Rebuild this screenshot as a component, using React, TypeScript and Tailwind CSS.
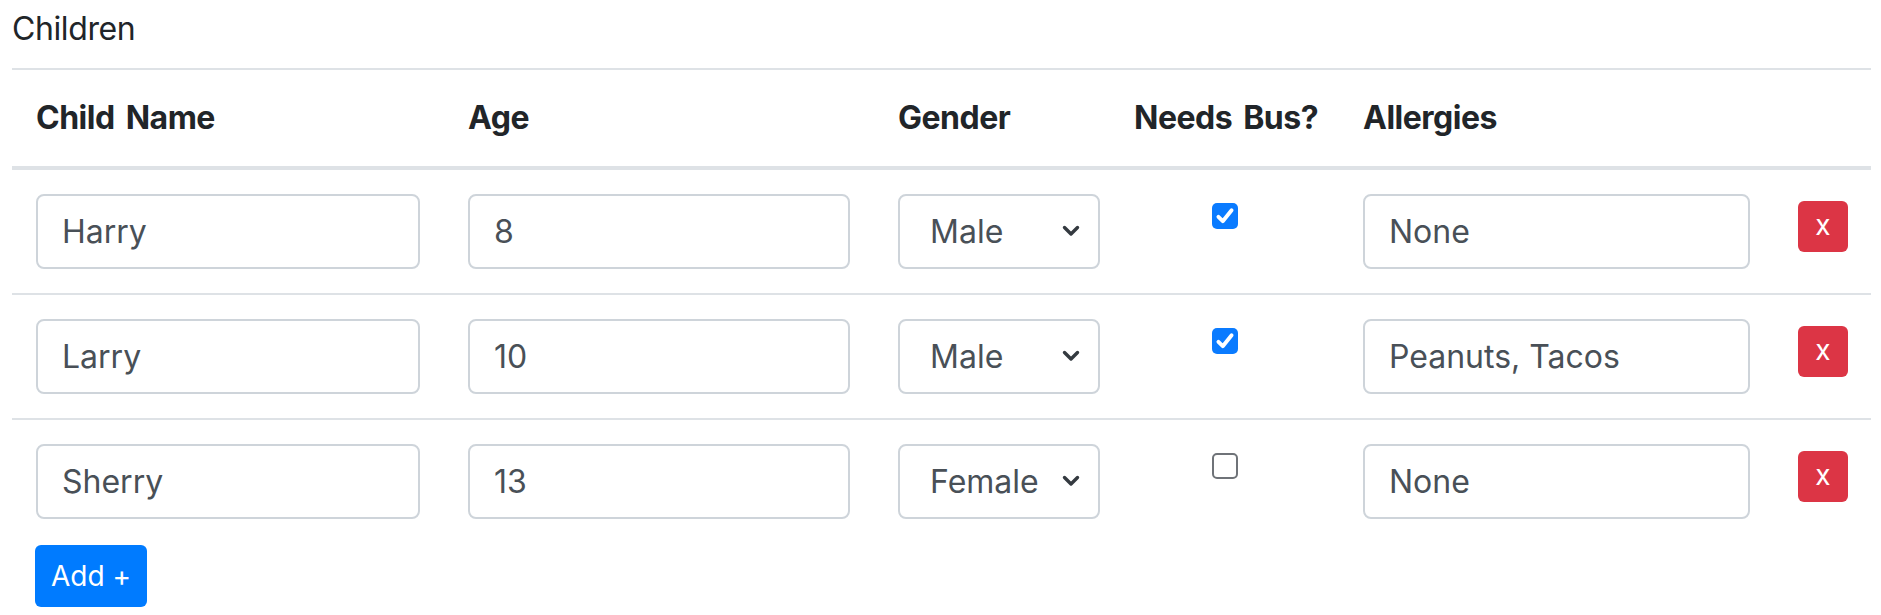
import React, { useState } from 'react';

interface Child {
  name: string;
  age: string;
  gender: string;
  bus: boolean;
  allergies: string;
}

const initial: Child[] = [
  { name: 'Harry', age: '8', gender: 'Male', bus: true, allergies: 'None' },
  { name: 'Larry', age: '10', gender: 'Male', bus: true, allergies: 'Peanuts, Tacos' },
  { name: 'Sherry', age: '13', gender: 'Female', bus: false, allergies: 'None' },
];

const inputCls =
  'block w-full h-[75px] px-[24px] rounded-[8px] border-2 border-[#ced4da] bg-white text-[32px] text-[#495057] outline-none';

const Checkbox: React.FC<{ checked: boolean; onChange: () => void }> = ({ checked, onChange }) => (
  <button
    type="button"
    onClick={onChange}
    className={`mx-auto mt-[9px] flex h-[26px] w-[26px] items-center justify-center rounded-[5px] ${
      checked ? 'bg-[#0a7bff]' : 'border-2 border-[#6f7378] bg-white'
    }`}
  >
    {checked && (
      <svg viewBox="0 0 16 16" className="h-[22px] w-[22px]">
        <path d="M3.2 8.6 L6.4 11.8 L12.8 3.8" fill="none" stroke="white" strokeWidth="2.8" strokeLinecap="round" strokeLinejoin="round" />
      </svg>
    )}
  </button>
);

const App: React.FC = () => {
  const [kids, setKids] = useState<Child[]>(initial);

  const update = (i: number, patch: Partial<Child>) =>
    setKids(kids.map((k, j) => (j === i ? { ...k, ...patch } : k)));

  return (
    <div className="min-h-screen bg-white pl-[12px] pr-[10px] pt-[5px] font-['Inter','Liberation_Sans',sans-serif] text-[#212529]">
      <label className="mb-[15px] block text-[32px] leading-[48px] tracking-[-0.4px]">Children</label>

      <table className="w-full table-fixed border-collapse">
        <colgroup>
          <col className="w-[432px]" />
          <col className="w-[430px]" />
          <col className="w-[236px]" />
          <col className="w-[229px]" />
          <col className="w-[435px]" />
          <col />
        </colgroup>
        <thead>
          <tr className="border-t-2 border-b-4 border-[#dee2e6] text-left">
            {['Child Name', 'Age', 'Gender', 'Needs Bus?', 'Allergies', ''].map((h, i) => (
              <th key={i} className="whitespace-nowrap p-[24px] align-bottom text-[32px] font-bold leading-[48px] tracking-[-0.5px] [word-spacing:4px]">
                {h}
              </th>
            ))}
          </tr>
        </thead>
        <tbody>
          {kids.map((k, i) => (
            <tr key={i} className={i > 0 ? 'border-t-2 border-[#dee2e6]' : ''}>
              <td className="p-[24px] align-top">
                <input className={inputCls} value={k.name} onChange={e => update(i, { name: e.target.value })} />
              </td>
              <td className="p-[24px] align-top">
                <input className={inputCls} value={k.age} onChange={e => update(i, { age: e.target.value })} />
              </td>
              <td className="p-[24px] align-top">
                <div className="relative w-[202px]">
                  <select
                    value={k.gender}
                    onChange={e => update(i, { gender: e.target.value })}
                    className="block h-[75px] w-[202px] appearance-none rounded-[8px] border-2 border-[#ced4da] bg-white pl-[30px] text-[32px] text-[#495057] outline-none"
                  >
                    <option>Male</option>
                    <option>Female</option>
                  </select>
                  <svg viewBox="0 0 18 12" className="pointer-events-none absolute right-[20px] top-[31px] h-[12px] w-[18px]">
                    <path d="M2.5 2.5 L9 9 L15.5 2.5" fill="none" stroke="#343a40" strokeWidth="3.4" strokeLinecap="round" strokeLinejoin="round" />
                  </svg>
                </div>
              </td>
              <td className="p-[24px] align-top">
                <Checkbox checked={k.bus} onChange={() => update(i, { bus: !k.bus })} />
              </td>
              <td className="p-[24px] align-top">
                <input className={inputCls} value={k.allergies} onChange={e => update(i, { allergies: e.target.value })} />
              </td>
              <td className="p-[24px] align-top">
                <button
                  type="button"
                  onClick={() => setKids(kids.filter((_, j) => j !== i))}
                  className="mt-[7px] flex h-[51px] w-[50px] items-center justify-center rounded-[6px] bg-[#dc3545] pb-[4px] text-[28px] text-white"
                >
                  x
                </button>
              </td>
            </tr>
          ))}
        </tbody>
      </table>

      <button
        type="button"
        onClick={() => setKids([...kids, { name: '', age: '', gender: 'Male', bus: false, allergies: '' }])}
        className="ml-[23px] mt-[2px] h-[62px] rounded-[6px] bg-[#007bff] px-[16px] text-[28px] leading-[42px] text-white"
      >
        Add +
      </button>
    </div>
  );
};

export default App;
